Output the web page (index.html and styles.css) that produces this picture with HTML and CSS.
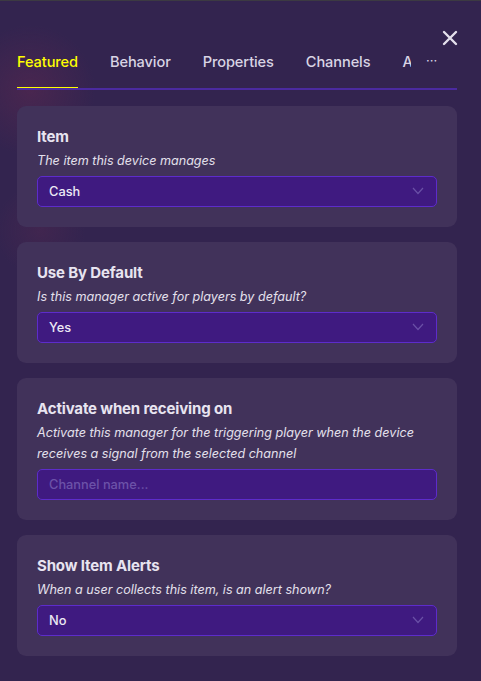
FILE: index.html
```html
<!DOCTYPE html>
<html>
<head>
<meta charset="utf-8">
<link rel="stylesheet" href="styles.css">
</head>
<body>
<div class="panel">
  <button class="close" aria-label="Close">
    <svg width="16" height="16" viewBox="0 0 16 16"><path d="M2 2 L14 14 M14 2 L2 14" stroke="#e4e0ec" stroke-width="2.4" stroke-linecap="round"/></svg>
  </button>
  <div class="tabbar">
    <div class="tabs">
      <span class="tab active">Featured</span>
      <span class="tab">Behavior</span>
      <span class="tab">Properties</span>
      <span class="tab">Channels</span>
      <span class="tab last">Actions</span>
    </div>
    <span class="more">···</span>
  </div>
  <div class="cards">
    <section class="card">
      <h3 class="title">Item</h3>
      <p class="desc">The item this device manages</p>
      <div class="select"><span>Cash</span><svg class="chev" width="12" height="8" viewBox="0 0 12 8"><path d="M1 1 L6 6.5 L11 1" fill="none" stroke="#6a50a6" stroke-width="1.2"/></svg></div>
    </section>
    <section class="card">
      <h3 class="title">Use By Default</h3>
      <p class="desc">Is this manager active for players by default?</p>
      <div class="select"><span>Yes</span><svg class="chev" width="12" height="8" viewBox="0 0 12 8"><path d="M1 1 L6 6.5 L11 1" fill="none" stroke="#6a50a6" stroke-width="1.2"/></svg></div>
    </section>
    <section class="card">
      <h3 class="title">Activate when receiving on</h3>
      <p class="desc">Activate this manager for the triggering player when the device receives a signal from the selected channel</p>
      <div class="select input"><span class="ph">Channel name...</span></div>
    </section>
    <section class="card">
      <h3 class="title">Show Item Alerts</h3>
      <p class="desc">When a user collects this item, is an alert shown?</p>
      <div class="select"><span>No</span><svg class="chev" width="12" height="8" viewBox="0 0 12 8"><path d="M1 1 L6 6.5 L11 1" fill="none" stroke="#6a50a6" stroke-width="1.2"/></svg></div>
    </section>
  </div>
</div>
</body>
</html>
```
FILE: styles.css
```css
html, body {
  margin: 0;
  padding: 0;
  height: 100%;
}
body {
  background:
    radial-gradient(circle at 30px 90px, rgba(95, 40, 80, 0.5) 0, rgba(95, 40, 80, 0) 65px),
    radial-gradient(circle at 40px 230px, rgba(85, 40, 80, 0.4) 0, rgba(85, 40, 80, 0) 45px),
    #33244f;
  border-top: 1px solid #3c3a42;
  font-family: Inter, "Noto Sans", sans-serif;
  color: #e6e2ee;
  overflow: hidden;
}
.panel {
  position: relative;
  width: 440px;
  margin-left: 17px;
  padding-top: 50px;
}
.close {
  position: absolute;
  top: 29px;
  right: -1px;
  background: none;
  border: 0;
  padding: 0;
  width: 16px;
  height: 16px;
  display: flex;
}
.tabbar {
  position: relative;
  display: flex;
  align-items: flex-start;
  border-bottom: 2px solid #4b2aa0;
}
.tabs {
  display: flex;
  width: 394px;
  overflow: hidden;
  white-space: nowrap;
}
.tab {
  font-size: 14.6px;
  line-height: 22px;
  font-weight: 500;
  color: #d9d4e4;
  margin-right: 32px;
  padding-bottom: 15px;
  flex: none;
  position: relative;
  letter-spacing: -0.1px;
}
.tab.last {
  margin-right: 0;
  flex: 0 1 auto;
  min-width: 0;
  overflow: hidden;
}
.tab.active {
  color: #ffff00;
}
.tab.active::after {
  content: "";
  position: absolute;
  left: 0;
  right: 0;
  bottom: -2px;
  height: 3px;
  background: #ffff00;
}
.more {
  margin-left: 15px;
  font-size: 13px;
  line-height: 18px;
  color: #d9d4e4;
}
.cards {
  display: flex;
  flex-direction: column;
  gap: 15px;
  margin-top: 16px;
}
.card {
  background: #41325a;
  border-radius: 9px;
  padding: 21px 20px 20px;
}
.title {
  margin: 0 0 3px;
  font-size: 15px;
  line-height: 20px;
  font-weight: 700;
  color: #e8e4f0;
  letter-spacing: -0.15px;
}
.desc {
  margin: 0 0 5px;
  font-size: 12.6px;
  line-height: 21px;
  font-style: italic;
  color: #e4e0ec;
}
.select {
  height: 31px;
  box-sizing: border-box;
  background: #3f1a80;
  border: 1.5px solid #5d2ccb;
  border-radius: 5px;
  display: flex;
  align-items: center;
  justify-content: space-between;
  padding: 0 12px 0 11px;
  font-size: 12.8px;
  font-weight: 500;
  color: #ece8f4;
}
.ph {
  color: #6c52a8;
}
.chev {
  margin-top: -2px;
}
```
